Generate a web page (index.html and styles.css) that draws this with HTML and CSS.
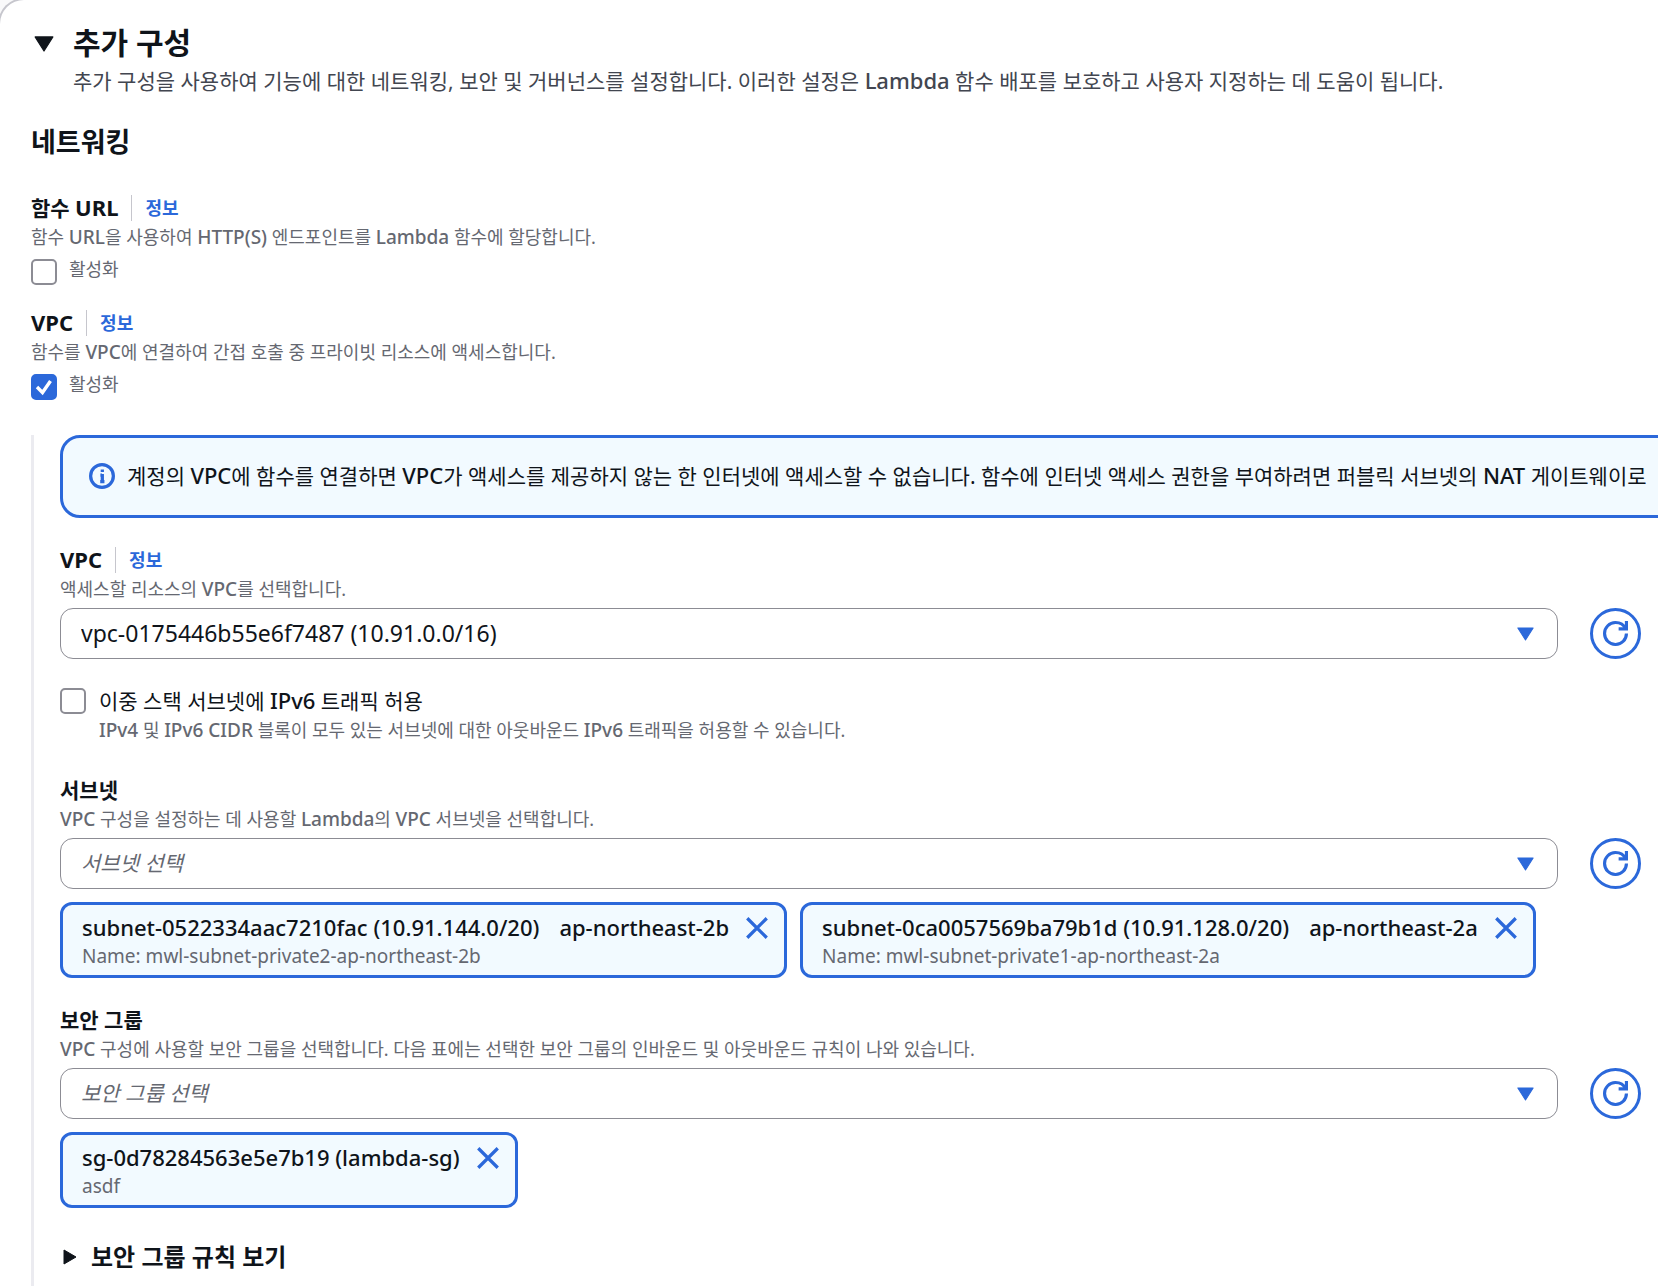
FILE: index.html
```html
<!DOCTYPE html>
<html lang="ko">
<head>
<meta charset="utf-8">
<meta name="viewport" content="width=device-width, initial-scale=1">
<title>추가 구성</title>
<link rel="stylesheet" href="styles.css">
</head>
<body>
<svg class="sprite" aria-hidden="true">
  <symbol id="refresh" viewBox="0 0 16 16"><path d="M10 5h5V0" fill="none" stroke="currentColor" stroke-width="2"/><path d="M15 8a6.950 6.950 0 0 1-7 7 6.950 6.950 0 0 1-7-7 6.950 6.950 0 0 1 7-7c2.900 0 5.400 1.600 6.500 4" fill="none" stroke="currentColor" stroke-width="2"/></symbol>
  <symbol id="close" viewBox="0 0 16 16"><path d="m2 2 12 12M14 2 2 14" fill="none" stroke="currentColor" stroke-width="2"/></symbol>
  <symbol id="caret" viewBox="0 0 16 13"><path d="M.8.8h14.400L8 12.200z" fill="currentColor" stroke="currentColor" stroke-width="1" stroke-linejoin="round"/></symbol>
  <symbol id="info" viewBox="0 0 16 16"><circle cx="8" cy="8" r="7" fill="none" stroke="currentColor" stroke-width="2"/><path d="M8.200 4v1.600M8.200 6.800V12M7 7.500h1M6.900 11.500h2.600" fill="none" stroke="currentColor" stroke-width="2"/></symbol>
</svg>
<main class="card">
  <header class="card-header">
    <button class="toggle" type="button" aria-label="추가 구성" aria-expanded="true"><svg class="toggle-icon"><use href="#caret"/></svg></button>
    <div>
      <h2 class="title">추가 구성</h2>
      <p class="subtitle">추가 구성을 사용하여 기능에 대한 네트워킹, 보안 및 거버넌스를 설정합니다. 이러한 설정은 <span class="latin">Lambda</span> 함수 배포를 보호하고 사용자 지정하는 데 도움이 됩니다.</p>
    </div>
  </header>
  <h3 class="section-title">네트워킹</h3>

  <div class="features">
    <section class="field">
      <div class="label-row"><span class="label">함수 <span class="latin">URL</span></span><a class="info-link" href="#url-info">정보</a></div>
      <p class="hint">함수 <span class="latin">URL</span>을 사용하여 <span class="latin">HTTP(S)</span> 엔드포인트를 <span class="latin">Lambda</span> 함수에 할당합니다.</p>
      <label class="enable"><input class="check" type="checkbox"><span>활성화</span></label>
    </section>
    <section class="field">
      <div class="label-row"><span class="label"><span class="latin">VPC</span></span><a class="info-link" href="#vpc-info">정보</a></div>
      <p class="hint">함수를 <span class="latin">VPC</span>에 연결하여 간접 호출 중 프라이빗 리소스에 액세스합니다.</p>
      <label class="enable"><input class="check" type="checkbox" checked><span>활성화</span></label>
    </section>
  </div>

  <div class="nested">
    <div class="alert" role="status">
      <svg class="alert-icon"><use href="#info"/></svg>
      <p>계정의 <span class="latin">VPC</span>에 함수를 연결하면 <span class="latin">VPC</span>가 액세스를 제공하지 않는 한 인터넷에 액세스할 수 없습니다. 함수에 인터넷 액세스 권한을 부여하려면 퍼블릭 서브넷의 <span class="latin">NAT</span> 게이트웨이로</p>
    </div>

    <section class="field">
      <div class="label-row"><label class="label" for="vpc"><span class="latin">VPC</span></label><a class="info-link" href="#vpc-select-info">정보</a></div>
      <p class="hint">액세스할 리소스의 <span class="latin">VPC</span>를 선택합니다.</p>
      <div class="control-row">
        <div class="select-box"><select id="vpc" class="select"><option>vpc-0175446b55e6f7487 (10.91.0.0/16)</option></select><svg class="select-caret"><use href="#caret"/></svg></div>
        <button class="refresh" type="button" aria-label="VPC 새로 고침"><svg class="refresh-icon"><use href="#refresh"/></svg></button>
      </div>
    </section>

    <div class="check-field">
      <input class="check" type="checkbox" id="ipv6">
      <div>
        <label class="check-label" for="ipv6">이중 스택 서브넷에 <span class="latin">IPv6</span> 트래픽 허용</label>
        <p class="hint"><span class="latin">IPv4</span> 및 <span class="latin">IPv6 CIDR</span> 블록이 모두 있는 서브넷에 대한 아웃바운드 <span class="latin">IPv6</span> 트래픽을 허용할 수 있습니다.</p>
      </div>
    </div>

    <section class="field">
      <div class="label-row"><label class="label" for="subnet">서브넷</label></div>
      <p class="hint"><span class="latin">VPC</span> 구성을 설정하는 데 사용할 <span class="latin">Lambda</span>의 <span class="latin">VPC</span> 서브넷을 선택합니다.</p>
      <div class="control-row">
        <div class="select-box"><select id="subnet" class="select placeholder"><option>서브넷 선택</option></select><svg class="select-caret"><use href="#caret"/></svg></div>
        <button class="refresh" type="button" aria-label="서브넷 새로 고침"><svg class="refresh-icon"><use href="#refresh"/></svg></button>
      </div>
      <div class="tokens">
        <div class="token">
          <div><div class="token-main"><span>subnet-0522334aac7210fac (10.91.144.0/20)</span><span>ap-northeast-2b</span></div><p class="token-note">Name: mwl-subnet-private2-ap-northeast-2b</p></div>
          <button class="dismiss" type="button" aria-label="제거"><svg class="dismiss-icon"><use href="#close"/></svg></button>
        </div>
        <div class="token">
          <div><div class="token-main"><span>subnet-0ca0057569ba79b1d (10.91.128.0/20)</span><span>ap-northeast-2a</span></div><p class="token-note">Name: mwl-subnet-private1-ap-northeast-2a</p></div>
          <button class="dismiss" type="button" aria-label="제거"><svg class="dismiss-icon"><use href="#close"/></svg></button>
        </div>
      </div>
    </section>

    <section class="field">
      <div class="label-row"><label class="label" for="sg">보안 그룹</label></div>
      <p class="hint"><span class="latin">VPC</span> 구성에 사용할 보안 그룹을 선택합니다. 다음 표에는 선택한 보안 그룹의 인바운드 및 아웃바운드 규칙이 나와 있습니다.</p>
      <div class="control-row">
        <div class="select-box"><select id="sg" class="select placeholder"><option>보안 그룹 선택</option></select><svg class="select-caret"><use href="#caret"/></svg></div>
        <button class="refresh" type="button" aria-label="보안 그룹 새로 고침"><svg class="refresh-icon"><use href="#refresh"/></svg></button>
      </div>
      <div class="tokens">
        <div class="token">
          <div><div class="token-main"><span>sg-0d78284563e5e7b19 (lambda-sg)</span></div><p class="token-note">asdf</p></div>
          <button class="dismiss" type="button" aria-label="제거"><svg class="dismiss-icon"><use href="#close"/></svg></button>
        </div>
      </div>
    </section>

    <button class="expander" type="button" aria-expanded="false"><svg class="expander-icon" viewBox="0 0 14 16"><path d="M1 1v14L13 8z" fill="currentColor" stroke="currentColor" stroke-linejoin="round"/></svg>보안 그룹 규칙 보기</button>
  </div>
</main>
</body>
</html>
```
FILE: styles.css
```css
:root {
  --blue: #2b68da;
  --ink: #0f141a;
  --muted: #656871;
  --line: #8c8c94;
  --tint: #f2faff;
}
* { box-sizing: border-box; }
body {
  display: flex;
  flex-direction: column;
  min-height: 100vh;
  margin: 0;
  overflow-x: hidden;
  background: #f9f9fa;
  color: var(--ink);
  font: 400 21px/32px "Noto Sans", "Noto Sans CJK KR", sans-serif;
}
h2, h3, p { margin: 0; }
button { padding: 0; border: 0; background: none; color: inherit; font: inherit; cursor: pointer; }
.sprite { display: none; }
/* Latin words run a step larger and heavier than the Hangul around them */
.latin { font-size: 22px; font-weight: 500; line-height: 1; }
.hint .latin { font-size: 19px; }
.label .latin { font-weight: 700; }
.card {
  flex: 1;
  display: flex;
  flex-direction: column;
  margin: -2px -60px 0 -2px;
  padding: 24px 75px 0 31px;
  border: 2px solid #c6c6cd;
  border-bottom: 0;
  border-radius: 26px 26px 0 0;
  background: #fff;
}
.card-header { display: flex; gap: 16px; }
.toggle { width: 26px; height: 40px; display: grid; place-items: center; }
.toggle-icon { width: 20px; height: 16px; }
.title { font-size: 30px; line-height: 38px; font-weight: 700; }
.subtitle { color: #424650; line-height: 38px; }
.section-title { margin: 24px 0 32px; font-size: 27px; line-height: 36px; }
.features { display: flex; flex-direction: column; gap: 22px; }
.label-row { display: flex; align-items: center; }
.label { font-weight: 700; }
.info-link {
  margin-left: 13px;
  padding-left: 13px;
  border-left: 1px solid #c6c6cd;
  color: var(--blue);
  font-size: 18px;
  line-height: 26px;
  font-weight: 600;
  text-decoration: none;
}
.hint { color: var(--muted); font-size: 18px; line-height: 26px; }
.enable { display: flex; gap: 12px; margin-top: 6px; color: var(--muted); font-size: 18px; line-height: 26px; }
.check {
  appearance: none;
  flex: none;
  width: 26px;
  height: 26px;
  margin: 3px 0 0;
  border: 2px solid var(--line);
  border-radius: 5px;
  background: #fff;
}
.check:checked {
  border-color: var(--blue);
  background: var(--blue) url('data:image/svg+xml,<svg xmlns="http://www.w3.org/2000/svg" viewBox="0 0 22 22"><path d="m4 11 5.500 5.500L17.500 5" fill="none" stroke="white" stroke-width="3.400"/></svg>') center / 22px no-repeat;
}
.nested {
  flex: 1;
  display: flex;
  flex-direction: column;
  gap: 26px;
  margin-top: 35px;
  padding-left: 26px;
  border-left: 3px solid #ebebf0;
}
.alert {
  display: flex;
  align-items: center;
  gap: 12px;
  margin-right: -60px;
  padding: 22px 26px 23px;
  border: 3px solid var(--blue);
  border-radius: 20px;
  background: var(--tint);
  white-space: nowrap;
}
.alert-icon { flex: none; width: 26px; height: 26px; color: var(--blue); }
.control-row { display: flex; gap: 32px; margin-top: 6px; }
.select-box { flex: 1; display: grid; align-items: center; }
.select {
  grid-area: 1 / 1;
  appearance: none;
  width: 100%;
  height: 51px;
  padding: 0 20px 2px;
  border: 1px solid var(--line);
  border-radius: 13px;
  background: #fff;
  color: inherit;
  font: inherit;
  font-size: 23px;
}
.placeholder { color: var(--muted); font-size: 21px; font-style: italic; }
.select-caret { grid-area: 1 / 1; justify-self: end; width: 17px; height: 14px; margin-right: 24px; color: var(--blue); pointer-events: none; }
.refresh { width: 51px; height: 51px; border: 3px solid var(--blue); border-radius: 50%; color: var(--blue); display: grid; place-items: center; }
.refresh-icon { width: 25px; height: 25px; }
.check-field { display: flex; gap: 13px; margin-bottom: 5px; }
.check-label { display: block; }
.tokens { display: flex; flex-wrap: wrap; gap: 13px; margin-top: 13px; }
.token { display: flex; align-items: flex-start; gap: 15px; padding: 6px 14px 6px 19px; border: 3px solid var(--blue); border-radius: 12px; background: var(--tint); }
.token-main { display: flex; gap: 20px; font-size: 22px; font-weight: 500; }
.token-note { color: var(--muted); font-size: 19px; line-height: 26px; }
.dismiss { height: 34px; color: var(--blue); display: grid; place-items: center; }
.dismiss-icon { width: 26px; height: 26px; }
.expander { display: flex; align-items: center; gap: 14px; margin-top: 5px; padding-left: 3px; font-size: 24px; line-height: 36px; font-weight: 700; }
.expander-icon { width: 14px; height: 16px; }
```
